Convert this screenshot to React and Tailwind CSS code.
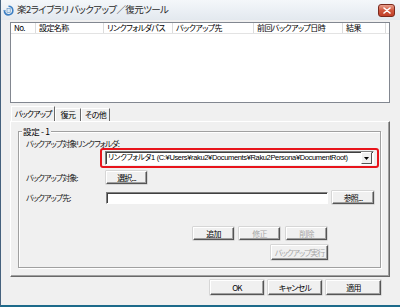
import React from "react";

const JP = "font-['Noto_Sans_CJK_JP',sans-serif] [font-feature-settings:'palt']";

function Btn({ children, w, h = "h-[13px]", disabled = false, track = "tracking-[-0.8px]" }) {
  return (
    <div
      className={`${w} ${h} flex items-center justify-center whitespace-nowrap bg-[#f0f0f0] border border-t-white border-l-white border-r-[#555] border-b-[#555] shadow-[inset_-1px_-1px_0_#a0a0a0,0_0_0_0.5px_#bbb] text-[8px] ${track} leading-none ${disabled ? "text-[#a8a8a8]" : "text-black"}`}
    >
      {children}
    </div>
  );
}

function TitleIcon() {
  return (
    <svg width="11" height="11" viewBox="0 0 11 11">
      <path d="M5.5 1.2 A4.3 4.3 0 1 1 1.4 6.8" fill="none" stroke="#3b7fc4" strokeWidth="1.6" />
      <path d="M0.3 5.2 L2.9 5.2 L1.4 8.2 Z" fill="#3b7fc4" />
      <rect x="4" y="3.5" width="3.2" height="4" fill="#d8e8f6" stroke="#5a8fc0" strokeWidth="0.6" />
    </svg>
  );
}

export default function App() {
  const cols = [
    ["No.", "w-[25px]"],
    ["設定名称", "w-[68px]"],
    ["リンクフォルダパス", "w-[69px]"],
    ["バックアップ先", "w-[81px]"],
    ["前回バックアップ日時", "w-[89px]"],
    ["結果", "w-[43px]"],
  ];
  return (
    <div className={`w-[400px] h-[307px] bg-[#f0f0f0] flex flex-col border-l border-l-[#46627e] border-b-2 border-b-[#1d6a8a] overflow-hidden ${JP}`}>
      {/* Title bar */}
      <div className="h-[20px] flex items-center bg-gradient-to-b from-[#f4f7fa] to-[#e3e9ef]">
        <div className="ml-[2px]">
          <TitleIcon />
        </div>
        <div className="ml-[3px] text-[9.5px] tracking-[-0.6px] leading-none text-[#2a2a2a] whitespace-nowrap">楽2ライブラリ バックアップ／復元ツール</div>
        <div className="ml-auto mr-[5px] w-[17px] h-[13px] rounded-[3px] border border-[#7a2a1e] bg-gradient-to-b from-[#e8a08e] via-[#d0573f] to-[#c0402a] flex items-center justify-center">
          <svg width="8" height="7" viewBox="0 0 8 7">
            <path d="M1 1 L7 6 M7 1 L1 6" stroke="white" strokeWidth="1.6" strokeLinecap="round" />
          </svg>
        </div>
      </div>

      {/* Client */}
      <div className="flex flex-col px-[9px]">
        {/* List view */}
        <div className="mt-[2px] w-[380px] h-[81px] bg-white border border-[#828790]">
          <div className="flex h-[11px] border-b border-[#e3e3e3]">
            {cols.map(([t, w]) => (
              <div key={t} className={`${w} h-full flex items-center pl-[3px] whitespace-nowrap border-r border-[#dcdcdc] text-[8px] tracking-[-0.6px] leading-none text-black`}>
                {t}
              </div>
            ))}
          </div>
        </div>

        {/* Tabs */}
        <div className="mt-[3px] flex items-end h-[15px] pl-[1px]">
          <div className="w-[44px] h-[15px] flex items-center justify-center whitespace-nowrap border-t border-l border-white border-r border-r-[#696969] text-[8px] tracking-[-0.9px] leading-none relative z-10 bg-[#f0f0f0]">
            バックアップ
          </div>
          <div className="w-[26px] h-[13px] flex items-center justify-center whitespace-nowrap border-t border-l border-white border-r border-r-[#696969] text-[8px] tracking-[-0.6px] leading-none">
            復元
          </div>
          <div className="w-[29px] h-[13px] flex items-center justify-center whitespace-nowrap border-t border-l border-white border-r border-r-[#696969] text-[8px] tracking-[-0.6px] leading-none">
            その他
          </div>
        </div>

        {/* Tab panel */}
        <div className="w-[380px] h-[156px] border border-t-white border-l-white border-r-[#696969] border-b-[#696969] shadow-[inset_-1px_-1px_0_#a0a0a0] pl-[7px] pt-[9px]">
          {/* Group box */}
          <div className="relative w-[363px] h-[137px] border border-[#a0a0a0] shadow-[1px_1px_0_#fff,inset_1px_1px_0_#fff] flex flex-col pl-[7px]">
            <div className="absolute -top-[6px] left-[3px] px-[1px] bg-[#f0f0f0] text-[8.5px] tracking-[-0.3px] leading-[10px] whitespace-nowrap">設定 - 1</div>

            <div className="mt-[7px] h-[10px] text-[8px] tracking-[-1px] leading-[10px] text-[#202020] whitespace-nowrap">バックアップ対象リンクフォルダ:</div>

            <div className="-mt-[1px] ml-[74px] w-[279px] h-[20px] border-2 border-[#e8141b] rounded-[3px] px-[3px] py-[1px]">
              <div className="h-[14px] bg-white border border-t-[#808080] border-l-[#808080] border-r-white border-b-white shadow-[inset_1px_1px_0_#404040] flex items-center">
                <div className="flex-1 pl-[2px] text-[7.5px] leading-none whitespace-nowrap overflow-hidden font-['Liberation_Sans','Noto_Sans_CJK_JP',sans-serif] tracking-[-0.35px]">
                  リンクフォルダ1 (C:¥Users¥raku2¥Documents¥Raku2Persona¥DocumentRoot)
                </div>
                <div className="w-[11px] h-[12px] mr-[1px] bg-[#f0f0f0] border border-t-white border-l-white border-r-[#555] border-b-[#555] flex items-center justify-center">
                  <svg width="5" height="3" viewBox="0 0 5 3">
                    <path d="M0 0 L5 0 L2.5 3 Z" fill="black" />
                  </svg>
                </div>
              </div>
            </div>

            <div className="mt-[3px] flex items-center h-[13px]">
              <div className="w-[80px] text-[8px] tracking-[-1px] leading-none text-[#202020] whitespace-nowrap">バックアップ対象:</div>
              <Btn w="w-[41px]">選択...</Btn>
            </div>

            <div className="mt-[7px] flex items-center h-[13px]">
              <div className="w-[80px] text-[8px] tracking-[-1px] leading-none text-[#202020] whitespace-nowrap">バックアップ先:</div>
              <div className="w-[222px] h-[12px] bg-white border border-t-[#808080] border-l-[#808080] border-r-white border-b-white shadow-[inset_1px_1px_0_#404040]" />
              <div className="ml-[4px]">
                <Btn w="w-[42px]">参照...</Btn>
              </div>
            </div>

            <div className="mt-[23px] flex justify-end pr-[53px] gap-[5px]">
              <Btn w="w-[41px]">追加</Btn>
              <Btn w="w-[41px]" disabled>修正</Btn>
              <div className="ml-[1px]">
                <Btn w="w-[41px]" disabled>削除</Btn>
              </div>
            </div>

            <div className="mt-[5px] flex justify-end pr-[52px]">
              <Btn w="w-[57px]" h="h-[15px]" disabled track="tracking-[-1.1px]">バックアップ実行</Btn>
            </div>
          </div>
        </div>

        {/* Bottom buttons */}
        <div className="mt-[3px] flex justify-end gap-[4px] pr-[10px]">
          <Btn w="w-[54px]" h="h-[15px]">OK</Btn>
          <Btn w="w-[54px]" h="h-[15px]">キャンセル</Btn>
          <Btn w="w-[55px]" h="h-[15px]">適用</Btn>
        </div>
      </div>
    </div>
  );
}
